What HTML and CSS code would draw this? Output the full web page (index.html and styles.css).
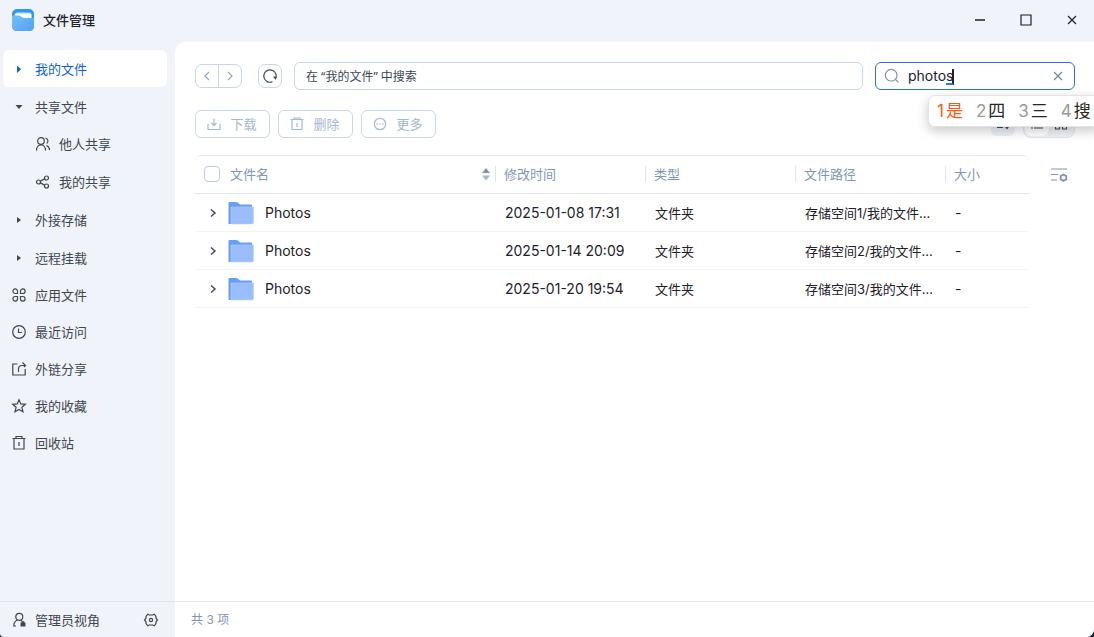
FILE: index.html
```html
<!DOCTYPE html>
<html lang="zh-CN">
<head>
<meta charset="utf-8">
<title>文件管理</title>
<link rel="stylesheet" href="styles.css">
</head>
<body>
<div class="window">
  <header class="titlebar">
    <svg class="logo" viewBox="0 0 22 22" aria-hidden="true">
      <defs>
        <linearGradient id="front" x1="0" y1="0" x2="1" y2="1"><stop offset="0" stop-color="#6cc3fb"/><stop offset="1" stop-color="#5b9cf3"/></linearGradient>
      </defs>
      <rect width="22" height="22" rx="5" fill="#2f97ee"/>
      <path d="M2.500 6.500C2.500 4.500 3.500 3.200 5.500 3.200H17C19 3.200 20 4.500 20 6.500V10H2.500Z" fill="#8ccdf9"/>
      <path d="M3 6Q3 4.600 4.500 4.600H17.500Q19 4.600 19 6V11H3Z" fill="#fff"/>
      <path d="M0 7.500Q0 6.500 1 6.500H7C9 6.500 9.500 9 12 9H21Q22 9 22 10V17Q22 22 17 22H5Q0 22 0 17Z" fill="url(#front)"/>
    </svg>
    <h1 class="app-title">文件管理</h1>
    <div class="window-controls">
      <button class="window-button" aria-label="最小化"><svg viewBox="0 0 12 12"><path d="M1 6h10" stroke-width="1.500"/></svg></button>
      <button class="window-button" aria-label="最大化"><svg viewBox="0 0 12 12"><path d="M1 1h10v10H1z"/></svg></button>
      <button class="window-button" aria-label="关闭"><svg viewBox="0 0 12 12"><path d="M2 2l8 8M10 2l-8 8"/></svg></button>
    </div>
  </header>

  <aside class="sidebar">
    <nav aria-label="位置">
      <ul class="tree">
        <li><a class="nav-item active" href="#" aria-current="page"><svg class="caret" viewBox="0 0 16 16"><path d="M6 4.500L10 8.300 6 12z"/></svg>我的文件</a></li>
        <li>
          <a class="nav-item" href="#"><svg class="caret" viewBox="0 0 16 16"><path d="M4.500 6h7L8 10z"/></svg>共享文件</a>
          <ul class="tree nested">
            <li><a class="nav-item" href="#"><svg class="icon" viewBox="0 0 16 16"><circle cx="6" cy="5" r="3.300"/><path d="M1.500 14.500C1.500 10.500 4 9 6 9s4.500 1.500 4.500 5.500M10.500 2.200a3 3 0 0 1 1.300 5.300M11.500 9.500c2 .8 3 2.500 3 4.500"/></svg>他人共享</a></li>
            <li><a class="nav-item" href="#"><svg class="icon" viewBox="0 0 16 16"><circle cx="3.500" cy="8" r="2"/><circle cx="11.500" cy="4" r="2"/><circle cx="11.500" cy="12" r="2"/><path d="M5.300 7.100l4.400-2.200M5.300 8.900l4.400 2.200"/></svg>我的共享</a></li>
          </ul>
        </li>
        <li><a class="nav-item" href="#"><svg class="caret" viewBox="0 0 16 16"><path d="M6 5l4 3-4 3z"/></svg>外接存储</a></li>
        <li><a class="nav-item" href="#"><svg class="caret" viewBox="0 0 16 16"><path d="M6 5l4 3-4 3z"/></svg>远程挂载</a></li>
      </ul>
      <ul class="places">
        <li><a class="nav-item" href="#"><svg class="icon" viewBox="0 0 16 16"><path d="M6.500 6.500H4.300A2.300 2.300 0 1 1 6.500 4.200ZM9.500 6.500V4.200a2.300 2.300 0 1 1 2.300 2.300ZM6.500 9.500v2.300a2.300 2.300 0 1 1-2.300-2.300ZM9.500 9.500h2.300a2.300 2.300 0 1 1-2.300 2.300Z"/></svg>应用文件</a></li>
        <li><a class="nav-item" href="#"><svg class="icon" viewBox="0 0 16 16"><circle cx="8" cy="8" r="6.300"/><path d="M7.500 4.500v4H11"/></svg>最近访问</a></li>
        <li><a class="nav-item" href="#"><svg class="icon" viewBox="0 0 16 16"><path d="M6.500 3H1.800v11h12.400V8M7.500 11V8q0-3.500 3.500-3.500h3M11.500 1.500l3 3-1.500 1.500"/></svg>外链分享</a></li>
        <li><a class="nav-item" href="#"><svg class="icon" viewBox="0 0 16 16"><path d="M8 1.700l1.800 4.200 4.600.4-3.500 3 1.100 4.500L8 11.400l-4 2.400 1.100-4.500-3.500-3 4.600-.4z"/></svg>我的收藏</a></li>
        <li><a class="nav-item" href="#"><svg class="icon" viewBox="0 0 16 16"><path d="M1.500 3.500h13M5 3.500v-2h6v2M3 3.500v10.500h10V3.500M8 7v4"/></svg>回收站</a></li>
      </ul>
    </nav>
    <div class="sidebar-footer">
      <button class="view-switch"><svg class="icon" viewBox="0 0 16 16"><circle cx="8.300" cy="4.800" r="3.500"/><path d="M6.500 8C4 9 2.800 11 2.800 14H5M9.500 8.400l1.500.7"/><path class="solid" d="M9.500 10.800h.8a1.700 1.700 0 0 1 3.400 0h.8V14.500h-5z"/></svg>管理员视角</button>
      <button class="settings" aria-label="设置"><svg class="icon" viewBox="0 0 16 16"><path d="M4.800 2.200L6.300 3h3.400l1.500-.8L13 4.500v1.700L14.500 8 13 9.800v1.700l-1.800 2.300-1.500-.8H6.300l-1.500.8L3 11.500V9.800L1.500 8 3 6.200V4.500Z"/><circle cx="8" cy="8" r="1.600"/></svg></button>
    </div>
  </aside>

  <main class="content">
    <div class="location-bar">
      <div class="history">
        <button aria-label="后退"><svg viewBox="0 0 12 12"><path d="M8 2L4 6l4 4"/></svg></button>
        <button aria-label="前进"><svg viewBox="0 0 12 12"><path d="M4 2l4 4-4 4"/></svg></button>
      </div>
      <button class="refresh" aria-label="刷新"><svg viewBox="0 0 16 16"><path d="M10.500 13.700A6.200 6.200 0 1 1 14.200 8.500"/><path class="solid" d="M11 8.500h4.500L13.500 11.800z"/></svg></button>
      <input class="path" type="text" aria-label="当前位置" value="在 “我的文件” 中搜索">
      <div class="search">
        <svg class="search-icon" viewBox="0 0 16 16"><circle cx="7.200" cy="7.200" r="5.800"/><path d="M11.500 11.500l3 3"/></svg>
        <input type="text" aria-label="搜索" value="photos">
        <span class="composing" aria-hidden="true"></span>
        <button aria-label="清除"><svg viewBox="0 0 12 12"><path d="M2 2l8 8M10 2l-8 8"/></svg></button>
        <ol class="candidates">
          <li class="selected"><span>1</span>是</li>
          <li><span>2</span>四</li>
          <li><span>3</span>三</li>
          <li><span>4</span>搜</li>
        </ol>
      </div>
    </div>

    <div class="actions">
      <button class="action"><svg class="icon" viewBox="0 0 16 16"><path d="M2 8v5.500h12V8M8 2.500v7M5.500 7L8 9.500 10.500 7"/></svg>下载</button>
      <button class="action"><svg class="icon" viewBox="0 0 16 16"><path d="M1.500 3.500h13M5 3.500v-1.500h6v1.500M3 3.500v10h10V3.500M8 7v4"/></svg>删除</button>
      <button class="action"><svg class="icon" viewBox="0 0 16 16"><circle cx="8" cy="8" r="5.700"/><path d="M4.500 8h1.500M7.300 8h1.500M10.100 8h1.500"/></svg>更多</button>
      <div class="view-tools">
        <button class="sort" aria-label="排序"><svg viewBox="0 0 16 16"><path d="M2 4h6M2 8h5M2 11.500h6M12 3v9M10 10l2 2.500 2-2.500"/></svg></button>
        <div class="view-modes">
          <button class="chosen" aria-label="列表"><svg viewBox="0 0 16 16"><path d="M2 4h2M5 4h9M2 8h2M5 8h9M2 12h2M5 12h9"/></svg></button>
          <button aria-label="网格"><svg viewBox="0 0 16 16"><path d="M2.500 3h4v4h-4zM9.500 3h4v4h-4zM2.500 9h4v4h-4zM9.500 9h4v4h-4z"/></svg></button>
        </div>
      </div>
    </div>

    <div class="listing">
      <table class="files">
        <colgroup><col><col class="col"><col class="col"><col class="col"><col class="col-size"></colgroup>
        <thead>
          <tr>
            <th scope="col"><div class="name-head"><input type="checkbox" id="all" aria-label="全选"><span>文件名</span><svg class="sort-mark" viewBox="0 0 10 14"><path d="M1 6l4-5 4 5z"/><path class="down" d="M1 8.500h8l-4 5z"/></svg></div></th>
            <th scope="col"><div class="head">修改时间</div></th>
            <th scope="col"><div class="head">类型</div></th>
            <th scope="col"><div class="head">文件路径</div></th>
            <th scope="col"><div class="head">大小</div></th>
          </tr>
        </thead>
        <tbody>
          <tr>
            <td><div class="name"><button class="expand" aria-label="展开"><svg viewBox="0 0 12 12"><path d="M4 2.500L8 6 4 9.500"/></svg></button><svg class="folder" viewBox="0 0 26 24"><path d="M.5 2Q.5 1 1.500 1H8q1 0 2 .8L12 3.500H23q1 0 1 1V23H.5z" fill="#659ff8"/><path d="M3 6h22.500v15.500q0 1.500-1.500 1.500H3z" fill="#9abdfb" stroke="#bcd3fd" stroke-width=".6"/></svg><span class="latin">Photos</span></div></td>
            <td class="latin">2025-01-08 17:31</td><td>文件夹</td><td>存储空间1/我的文件...</td><td class="latin">-</td>
          </tr>
          <tr>
            <td><div class="name"><button class="expand" aria-label="展开"><svg viewBox="0 0 12 12"><path d="M4 2.500L8 6 4 9.500"/></svg></button><svg class="folder" viewBox="0 0 26 24"><path d="M.5 2Q.5 1 1.500 1H8q1 0 2 .8L12 3.500H23q1 0 1 1V23H.5z" fill="#659ff8"/><path d="M3 6h22.500v15.500q0 1.500-1.500 1.500H3z" fill="#9abdfb" stroke="#bcd3fd" stroke-width=".6"/></svg><span class="latin">Photos</span></div></td>
            <td class="latin">2025-01-14 20:09</td><td>文件夹</td><td>存储空间2/我的文件...</td><td class="latin">-</td>
          </tr>
          <tr>
            <td><div class="name"><button class="expand" aria-label="展开"><svg viewBox="0 0 12 12"><path d="M4 2.500L8 6 4 9.500"/></svg></button><svg class="folder" viewBox="0 0 26 24"><path d="M.5 2Q.5 1 1.500 1H8q1 0 2 .8L12 3.500H23q1 0 1 1V23H.5z" fill="#659ff8"/><path d="M3 6h22.500v15.500q0 1.500-1.500 1.500H3z" fill="#9abdfb" stroke="#bcd3fd" stroke-width=".6"/></svg><span class="latin">Photos</span></div></td>
            <td class="latin">2025-01-20 19:54</td><td>文件夹</td><td>存储空间3/我的文件...</td><td class="latin">-</td>
          </tr>
        </tbody>
      </table>
      <button class="columns" aria-label="列设置"><svg viewBox="0 0 18 16"><path d="M1 2h16M1 7.500h7M1 13h6"/><path d="M13.500 7.500l2.800 1.600v3.200l-2.800 1.600-2.800-1.600V9.100z" stroke-width="1.800"/></svg></button>
    </div>

    <footer class="status">共 3 项</footer>
  </main>
</div>
</body>
</html>
```
FILE: styles.css
```css
* { box-sizing: border-box; }

body {
  margin: 0;
  background: #23284a;
  color: #1d2129;
  font-family: Inter, "Noto Sans CJK SC", sans-serif;
  font-size: 13px;
  line-height: 20px;
}

button, input {
  margin: 0;
  padding: 0;
  border: 0;
  background: none;
  color: inherit;
  font: inherit;
}

button {
  display: flex;
  align-items: center;
  justify-content: center;
}

ul, ol { margin: 0; padding: 0; list-style: none; }

svg {
  flex: none;
  fill: none;
  stroke: currentColor;
  stroke-width: 1.2;
}

.icon, .caret { width: 16px; height: 16px; }
.caret, .solid { fill: currentColor; stroke: none; }

.window {
  display: grid;
  grid-template: 42px 1fr / 175px 1fr;
  height: 100vh;
  overflow: hidden;
  border-radius: 0 0 8px 4px;
  background: #f0f3f9;
}

/* Title bar */
.titlebar {
  grid-column: 1 / -1;
  display: flex;
  align-items: center;
  gap: 9px;
  padding: 0 0 2px 12px;
}

.logo { width: 22px; height: 22px; stroke: none; }
.app-title { margin: 0; font-size: 13px; font-weight: 500; }
.window-controls { display: flex; margin-left: auto; }
.window-button { width: 46px; height: 40px; padding-left: 2px; }
.window-button svg { width: 12px; height: 12px; }

/* Sidebar */
.sidebar {
  display: flex;
  flex-direction: column;
  padding-top: 8px;
  color: #3f4752;
}

.sidebar nav { flex: 1; padding: 0 8px 0 3px; }
.tree { display: grid; gap: 1px; }

.nav-item {
  display: flex;
  align-items: center;
  gap: 8px;
  height: 37px;
  padding-left: 8px;
  border-radius: 6px;
  color: inherit;
  text-decoration: none;
}

.nav-item.active { background: #fff; color: #0f5fdc; }
.nested .nav-item { padding-left: 32px; }

.sidebar-footer {
  display: flex;
  align-items: center;
  justify-content: space-between;
  height: 36px;
  padding: 0 16px 0 11px;
  border-top: 1px solid #e2e7ee;
}

.view-switch { gap: 8px; }

/* Content */
.content {
  display: flex;
  flex-direction: column;
  min-width: 0;
  padding-top: 20px;
  border-top-left-radius: 10px;
  background: #fff;
}

.location-bar {
  display: flex;
  align-items: center;
  padding: 0 19px 0 20px;
}

.history {
  display: flex;
  height: 24px;
  margin-right: 16px;
  border: 1px solid #c9d6e6;
  border-radius: 7px;
  color: #8fa5c0;
}

.history button { width: 22px; }
.history button + button { width: 23px; border-left: 1px solid #c9d6e6; }
.history svg { width: 12px; height: 12px; }

.refresh {
  width: 24px;
  height: 24px;
  margin-right: 12px;
  border: 1px solid #c9d6e6;
  border-radius: 7px;
  color: #3f4d63;
}

.refresh svg { width: 16px; height: 16px; }

.path {
  flex: 1;
  min-width: 0;
  height: 28px;
  margin-right: 12px;
  padding: 0 11px;
  border: 1px solid #c9d6e6;
  border-radius: 6px;
  color: #3c4558;
  font-family: "Noto Sans", "Noto Sans CJK SC", sans-serif;
  font-size: 12px;
}

.search {
  position: relative;
  display: flex;
  align-items: center;
  gap: 8px;
  width: 200px;
  height: 28px;
  padding: 0 8px;
  border: 1px solid #2b6fd6;
  border-radius: 6px;
}

.search-icon { width: 16px; height: 16px; color: #7f95b2; }
.search input { flex: 1; min-width: 0; outline: 0; font-size: 14px; }
.search button { width: 16px; height: 16px; color: #6f88a8; }
.search button svg { width: 12px; height: 12px; }

.composing {
  position: absolute;
  top: 6px;
  left: 70px;
  width: 8px;
  height: 16px;
  border-right: 2px solid #1d2129;
  border-bottom: 2px solid #1b7cf0;
}

.candidates {
  position: absolute;
  top: 32px;
  left: 52px;
  display: flex;
  align-items: center;
  gap: 13px;
  height: 32px;
  padding: 0 8px;
  border: 1px solid #e2e4e8;
  border-radius: 7px;
  background: #fff;
  box-shadow: 0 4px 12px rgb(0 0 0 / 22%);
  color: #262626;
  font-size: 17px;
  white-space: nowrap;
}

.candidates li { display: flex; gap: 2px; }
.candidates span { color: #999; }
.candidates .selected, .candidates .selected span { color: #fa5a0f; }

.actions {
  display: flex;
  align-items: center;
  gap: 8px;
  padding: 20px 19px 17px 20px;
}

.action {
  gap: 8px;
  width: 75px;
  height: 28px;
  padding-right: 2px;
  border: 1px solid #c9d6e6;
  border-radius: 6px;
  color: #a5b8cf;
}

.view-tools { display: flex; align-items: center; gap: 8px; margin-left: auto; color: #3f4d63; }
.view-tools svg { width: 16px; height: 16px; }
.sort { width: 24px; height: 24px; border-radius: 6px; background: #edf0f5; }
.view-modes { display: flex; padding: 1px; border: 1px solid #e3e7ed; border-radius: 8px; background: #f1f3f6; }
.view-modes button { width: 24px; height: 24px; border-radius: 7px; }
.view-modes .chosen { background: #fff; }

/* File table */
.listing {
  display: flex;
  align-items: flex-start;
  flex: 1;
  padding: 0 26px 0 20px;
}

.files {
  flex: 1;
  min-width: 0;
  border-top: 1px solid #e4e9f1;
  border-radius: 6px;
  border-spacing: 0;
  table-layout: fixed;
}

.col { width: 150px; }
.col-size { width: 84px; }
.files th { height: 38px; padding: 0 0 2px; border-bottom: 1px solid #e0e7f1; color: #8196b3; font-weight: 400; text-align: left; }
.files td { height: 38px; padding: 0 0 0 10px; border-bottom: 1px solid #f1f3f6; white-space: nowrap; }
.files td:first-child { padding: 0; }
.files .latin { font-size: 14px; }

.head { height: 16px; padding-left: 8px; border-left: 1px solid #dfe5ee; line-height: 16px; }
.name-head { display: flex; align-items: center; gap: 10px; padding: 0 4px 0 9px; }

.name-head input {
  width: 16px;
  height: 16px;
  border: 1px solid #bccbdd;
  border-radius: 4px;
  appearance: none;
}

.sort-mark { width: 10px; height: 14px; margin-left: auto; fill: #7f95b2; stroke: none; }
.sort-mark .down { fill: #a9b9cd; }
.name { display: flex; align-items: center; padding-left: 10px; }
.expand { width: 16px; height: 16px; margin-right: 7px; color: #3f4d63; }
.expand svg { width: 12px; height: 12px; stroke-width: 1.5; }
.folder { width: 26px; height: 24px; margin-right: 11px; stroke: none; }

.columns { width: 18px; height: 40px; margin-left: 21px; color: #7f95b2; }
.columns svg { width: 18px; height: 16px; }

.status {
  height: 36px;
  padding-left: 16px;
  border-top: 1px solid #e2e7ee;
  color: #8196b3;
  font-size: 12px;
  line-height: 36px;
}
```
